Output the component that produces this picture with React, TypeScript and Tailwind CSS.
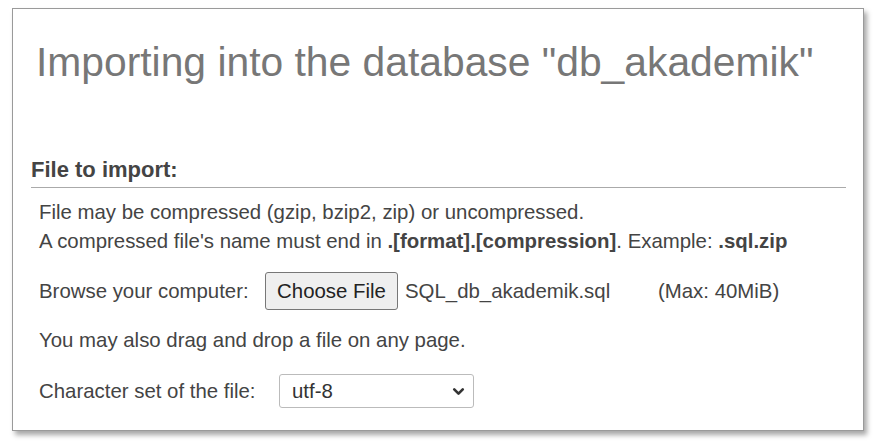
import { ChevronDown } from "lucide-react";

export default function App() {
  return (
    <div className="w-[878px] h-[448px] bg-white pl-[12px] pt-[8px] font-['Liberation_Sans',Arial,sans-serif]">
      <div className="w-[852px] h-[423px] border border-[#9a9a9a] bg-white shadow-[3px_4px_5px_rgba(0,0,0,0.35)] pl-[18px] pr-[17px]">
        <h1 className="ml-[5px] pt-[29px] text-[40.8px] leading-[48px] text-[#777]">
          Importing into the database "db_akademik"
        </h1>

        <h2 className="mt-[71px] text-[22px] font-bold leading-[26px] text-[#444] border-b border-[#aaa] pb-[4px]">
          File to import:
        </h2>

        <div className="pl-[8px] pt-[10px] text-[20.4px] text-[#444]">
          <p className="leading-[29px]">File may be compressed (gzip, bzip2, zip) or uncompressed.</p>
          <p className="leading-[29px]">
            A compressed file's name must end in <b>.[format].[compression]</b>. Example:{" "}
            <b>.sql.zip</b>
          </p>

          <div className="mt-[16px] flex items-center h-[38px]">
            <span className="w-[226px]">Browse your computer:</span>
            <button className="w-[133px] h-[38px] border border-[#777] rounded-[3px] bg-[#efefef] text-[#222] text-[20.4px]">
              Choose File
            </button>
            <span className="ml-[7px] w-[253px]">SQL_db_akademik.sql</span>
            <span>(Max: 40MiB)</span>
          </div>

          <p className="mt-[16px] leading-[29px]">You may also drag and drop a file on any page.</p>

          <div className="mt-[19px] flex items-center h-[34px]">
            <span className="w-[240px]">Character set of the file:</span>
            <div className="w-[195px] h-[34px] border border-[#bbb] rounded-[3px] flex items-center justify-between pl-[12px] pr-[6px] text-[#333]">
              <span>utf-8</span>
              <ChevronDown size={17} strokeWidth={3.75} className="text-[#333]" />
            </div>
          </div>
        </div>
      </div>
    </div>
  );
}
